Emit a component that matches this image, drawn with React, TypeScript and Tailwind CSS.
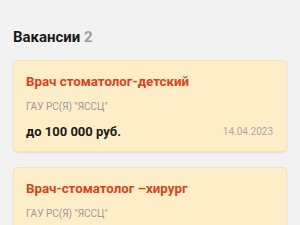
const vacancies = [
  { title: 'Врач стоматолог-детский', org: 'ГАУ РС(Я) "ЯССЦ"', salary: 'до 100 000 руб.', date: '14.04.2023' },
  { title: 'Врач-стоматолог –хирург', org: 'ГАУ РС(Я) "ЯССЦ"', salary: 'до 100 000 руб.', date: '14.04.2023' },
];

export default function App() {
  return (
    <main className="min-h-screen bg-[#f2f2f2] px-[13px] pt-[27px] font-['Roboto',sans-serif]">
      <h1 className="text-[15px] leading-[20px] font-bold text-[#1a1a1a]">
        Вакансии <span className="text-[#a0a0a0]">2</span>
      </h1>

      <div className="mt-[13px] flex flex-col gap-[15px]">
        {vacancies.map((v, i) => (
          <div
            key={i}
            className="rounded-[4px] bg-[#feeec7] border border-[#f3e2bb] shadow-[0_1px_2px_rgba(0,0,0,0.08)] pl-[12px] pr-[13px] pt-[11px] pb-[9px]"
          >
            <div className="text-[13.3px] leading-[20px] font-bold text-[#d9431b]">{v.title}</div>
            <div className="mt-[8px] text-[10px] leading-[14px] text-[#9a9a9a]">{v.org}</div>
            <div className="mt-[8px] flex items-center justify-between">
              <span className="text-[13px] leading-[20px] font-bold text-[#1a1a1a]">{v.salary}</span>
              <span className="text-[10px] leading-[14px] text-[#a8a8a8]">{v.date}</span>
            </div>
          </div>
        ))}
      </div>
    </main>
  );
}
